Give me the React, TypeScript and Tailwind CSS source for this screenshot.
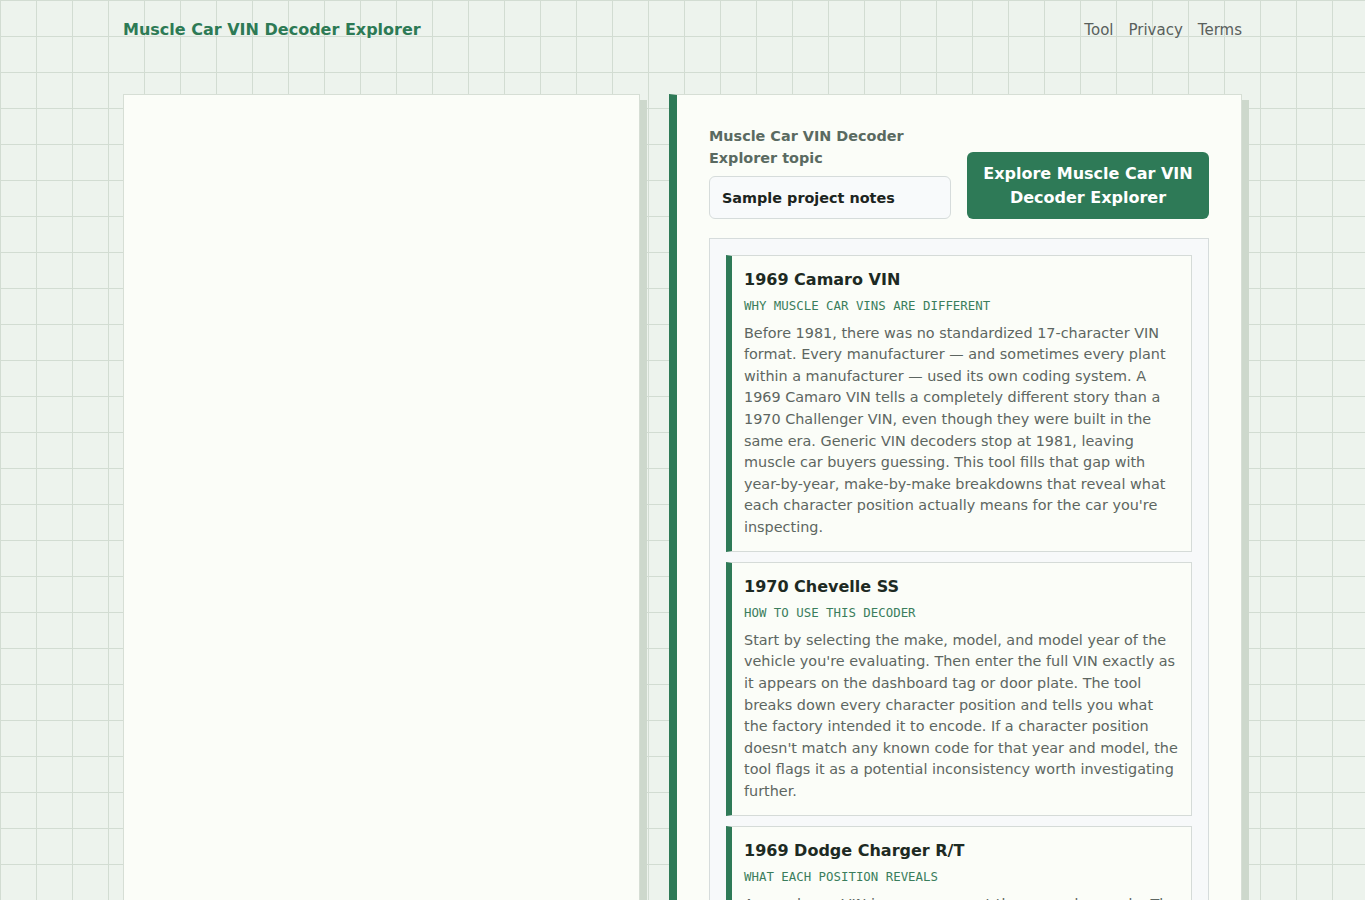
const sections = [
  {
    title: '1969 Camaro VIN',
    kicker: 'Why muscle car VINs are different',
    body: "Before 1981, there was no standardized 17-character VIN format. Every manufacturer — and sometimes every plant within a manufacturer — used its own coding system. A 1969 Camaro VIN tells a completely different story than a 1970 Challenger VIN, even though they were built in the same era. Generic VIN decoders stop at 1981, leaving muscle car buyers guessing. This tool fills that gap with year-by-year, make-by-make breakdowns that reveal what each character position actually means for the car you're inspecting.",
  },
  {
    title: '1970 Chevelle SS',
    kicker: 'How to use this decoder',
    body: "Start by selecting the make, model, and model year of the vehicle you're evaluating. Then enter the full VIN exactly as it appears on the dashboard tag or door plate. The tool breaks down every character position and tells you what the factory intended it to encode. If a character position doesn't match any known code for that year and model, the tool flags it as a potential inconsistency worth investigating further.",
  },
  {
    title: '1969 Dodge Charger R/T',
    kicker: 'What each position reveals',
    body: 'A muscle car VIN is more compact than a modern code. The first character identifies the car line, followed by the price class, body style, engine code, model year, assembly plant and the sequential production number. Each of these can be checked against the fender tag and the broadcast sheet.',
  },
]

export default function App() {
  return (
    <div
      className="min-h-screen bg-[#edf3ed] bg-[linear-gradient(to_right,#d2dcd2_1px,transparent_1px),linear-gradient(to_bottom,#d2dcd2_1px,transparent_1px)] bg-[size:36px_36px] pb-16"
      style={{ fontFamily: '"DejaVu Sans", Verdana, sans-serif' }}
    >
      <div className="mx-auto w-[1119px]">
        <header className="flex h-[60px] items-center justify-between">
          <a href="#" className="text-[16px] font-bold text-[#2d7a55]">
            Muscle Car VIN Decoder Explorer
          </a>
          <nav className="flex items-center gap-[15px] text-[15px] text-[#59605c]">
            <a href="#">Tool</a>
            <a href="#">Privacy</a>
            <a href="#">Terms</a>
          </nav>
        </header>

        <main className="mt-[34px] grid grid-cols-[517px_1fr] gap-[29px]">
          <section className="border border-[#d6ded5] bg-[#fbfdf8] shadow-[7px_6px_0_#cdd8cc]" />

          <section className="border border-l-8 border-[#d6ded5] border-l-[#2e7a57] bg-[#fbfdf8] px-8 pt-[30px] pb-8 shadow-[7px_6px_0_#cdd8cc]">
            <form className="grid grid-cols-2 items-end gap-4" onSubmit={(e) => e.preventDefault()}>
              <div>
                <label htmlFor="topic" className="mb-[7px] block text-[14.4px] font-bold leading-[22px] text-[#5a6a61]">
                  Muscle Car VIN Decoder Explorer topic
                </label>
                <input
                  id="topic"
                  defaultValue="Sample project notes"
                  className="block h-[43px] w-full rounded-md border border-[#d6dcdb] bg-[#f8fafb] px-3 text-[14.4px] font-bold text-[#1c2420] outline-none"
                />
              </div>
              <button
                type="submit"
                className="rounded-md bg-[#2e7a57] px-3 py-[9.5px] text-[16px] font-bold leading-[1.5] text-white"
              >
                Explore Muscle Car VIN Decoder Explorer
              </button>
            </form>

            <div className="mt-[19px] flex flex-col gap-[10.5px] border border-[#d6dcdc] bg-[#f7f9fa] p-4">
              {sections.map((s) => (
                <article key={s.title} className="border border-l-[6px] border-[#d5dbd8] border-l-[#2e7a57] bg-[#fbfdf8] p-3">
                  <h3 className="text-[16px] font-bold leading-[23px] text-[#1d2a23]">{s.title}</h3>
                  <p
                    className="mt-1.5 text-[12.4px] uppercase leading-[1.5] text-[#3a7d5c]"
                    style={{ fontFamily: '"DejaVu Sans Mono", monospace' }}
                  >
                    {s.kicker}
                  </p>
                  <p className="mt-[7px] text-[14.4px] leading-[1.5] text-[#5d6661]">{s.body}</p>
                </article>
              ))}
            </div>
          </section>
        </main>
      </div>
    </div>
  )
}
